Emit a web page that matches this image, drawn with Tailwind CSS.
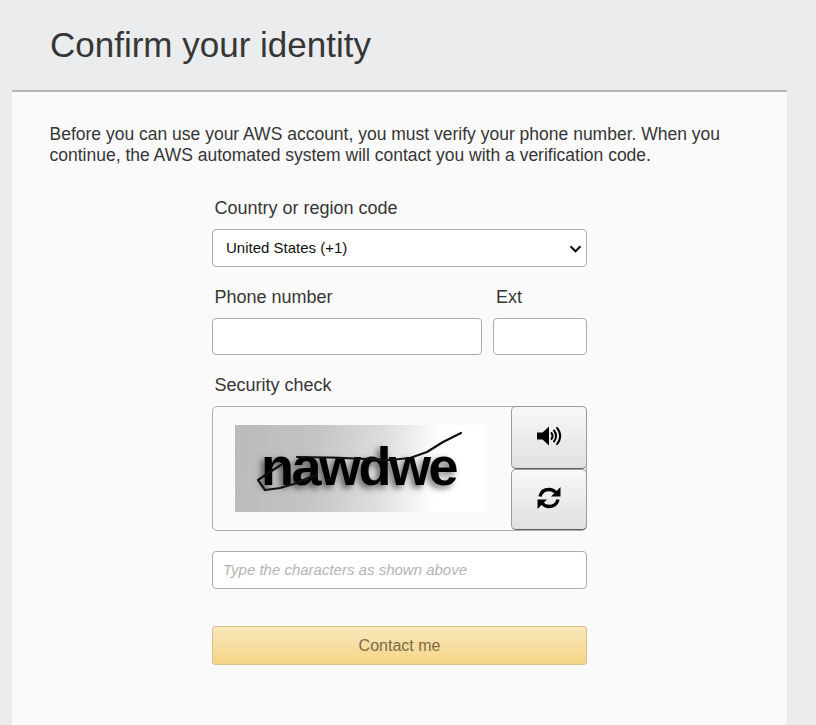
<!DOCTYPE html>
<html>
<head>
<meta charset="utf-8">
<script src="https://cdn.jsdelivr.net/npm/@tailwindcss/browser@4"></script>
</head>
<body class="bg-[#ebecee] font-['Liberation_Sans',Arial,sans-serif] text-[#363636] overflow-hidden">
<div class="w-[816px] h-[725px] pl-3 pr-[29px] overflow-hidden">
  <div class="h-[90px] pl-[38px] pt-[23px]">
    <h1 class="text-[35px] leading-[44px] font-normal">Confirm your identity</h1>
  </div>
  <div class="h-[635px] bg-[#fafafa] border-t-2 border-[#b3b7bd] pt-[32px]">
    <p class="ml-[37.500px] w-[690px] text-[17.5px] leading-[21px]">Before you can use your AWS account, you must verify your phone number. When you continue, the AWS automated system will contact you with a verification code.</p>
    <div class="ml-[200px] w-[375px] mt-[32px]">
      <label class="block pl-[2.500px] text-[18px] leading-[21px]">Country or region code</label>
      <div class="relative mt-[10px] h-[38px]">
        <select class="appearance-none w-full h-[38px] pl-[13px] pr-[4px] bg-white border border-[#a9adb0] rounded-[4px] text-[15px] text-[#111]">
          <option>United States (+1)</option>
        </select>
        <svg class="absolute right-[5px] top-[16px] pointer-events-none" width="13" height="8" viewBox="0 0 13 8" fill="none" stroke="#111" stroke-width="2.200"><path d="M1.500 1.200l5 5 5-5"/></svg>
      </div>
      <div class="flex gap-[11px] mt-[20px]">
        <div class="w-[270px]">
          <label class="block pl-[2.500px] text-[18px] leading-[21px]">Phone number</label>
          <input class="block mt-[10px] w-full h-[37px] bg-white border border-[#a9adb0] rounded-[4px]">
        </div>
        <div class="w-[94px]">
          <label class="block pl-[3px] text-[18px] leading-[21px]">Ext</label>
          <input class="block mt-[10px] w-full h-[37px] bg-white border border-[#a9adb0] rounded-[4px]">
        </div>
      </div>
      <label class="block pl-[2.500px] mt-[20px] text-[18px] leading-[21px]">Security check</label>
      <div class="flex mt-[10px] h-[125px] border border-[#a9adb0] rounded-[5px] bg-[#fafafa]">
        <div class="w-[298px] shrink-0 pl-[22px] pt-[18px]">
          <div class="relative w-[250px] h-[87px] overflow-hidden bg-[linear-gradient(98deg,#bababa_0%,#c4c4c4_32%,#dedede_58%,#ffffff_80%,#ffffff_100%)]">
            <span class="absolute left-[26px] top-[9px] font-bold text-[54px] leading-[64px] tracking-[-2.500px] text-black blur-[0.6px] [text-shadow:-3px_3px_6px_#00000090]">nawdwe</span>
            <svg class="absolute left-0 top-0" width="250" height="87" viewBox="0 0 250 87" fill="none" stroke="#111" stroke-width="2.200" stroke-linejoin="round" stroke-linecap="round">
              <path d="M226 8L208 17L192 27L175 33L155 35C130 34 95 32 62 32"/>
              <path d="M46 40L38 45L23 55L30 65L45 63L62 58L75 52L82 50"/>
            </svg>
          </div>
        </div>
        <div class="flex flex-col w-[76px] shrink-0 -mt-px -mr-px">
          <button class="h-[63px] flex items-center justify-center pb-[3px] border border-[#9a9c9f] border-b-[#5f6063] rounded-[5px] bg-[linear-gradient(180deg,#f8f8f8,#e0e0e0)]" aria-label="Audio">
            <svg width="25" height="20" viewBox="0 0 25 20" fill="#000"><path d="M0 6.500h5.500L12 .5v19l-6.500-6H0z"/><g fill="none" stroke="#000" stroke-width="2" stroke-linecap="round"><path d="M14.500 7c1.300 1.800 1.300 4.200 0 6"/><path d="M17 4.500c2.700 3 2.700 8 0 11"/><path d="M20 2c4.200 4.500 4.200 11.500 0 16"/></g></svg>
          </button>
          <button class="h-[61px] flex items-center justify-center pb-[4px] border border-[#9a9c9f] border-b-[#5f6063] rounded-[5px] bg-[linear-gradient(180deg,#f8f8f8,#e0e0e0)]" aria-label="Refresh">
            <svg width="24" height="22" viewBox="0 0 24 22" fill="none" stroke="#000" stroke-width="3.400"><path d="M3 9.500C4 5 7.500 2.500 12 2.500c2.800 0 5 1.100 6.600 3"/><path d="M21 12.500c-1 4.500-4.500 7-9 7-2.800 0-5-1.100-6.600-3"/><path fill="#000" stroke="none" d="M23.500 0v9.500h-9.500zM.5 22v-9.500h9.500z"/></svg>
          </button>
        </div>
      </div>
      <input placeholder="Type the characters as shown above" class="block mt-[20px] w-full h-[38px] pl-[10px] pb-[2px] bg-white border border-[#a9adb0] rounded-[4px] text-[15px] italic placeholder:text-[#b4b4b4]">
      <button class="block mt-[37px] w-full h-[39px] border border-[#d6c08c] rounded-[3px] bg-[linear-gradient(180deg,#f8e6bc,#f6d586)] text-[16px] text-[#7a6b47]">Contact me</button>
    </div>
  </div>
</div>
</body>
</html>
